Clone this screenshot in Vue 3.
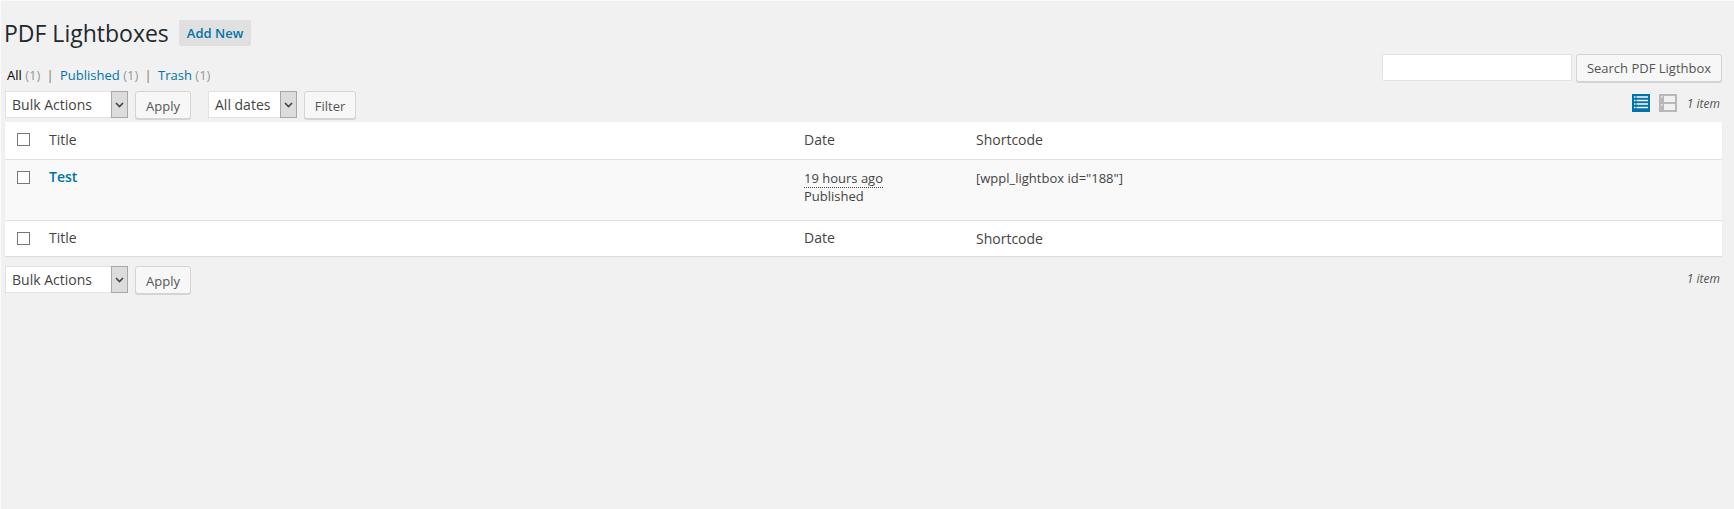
<template>
  <div class="wrap">
    <div class="heading">
      <h1>PDF Lightboxes</h1>
      <a class="add-new">Add New</a>
    </div>

    <div class="top-row">
      <ul class="subsub">
        <li><span class="current">All</span> <span class="count">(1)</span></li>
        <li class="sep">|</li>
        <li><a>Published</a> <span class="count">(1)</span></li>
        <li class="sep">|</li>
        <li><a>Trash</a> <span class="count">(1)</span></li>
      </ul>
      <div class="search">
        <div class="search-input"></div>
        <button class="btn search-btn">Search PDF Ligthbox</button>
      </div>
    </div>

    <div class="tablenav top">
      <div class="actions">
        <div class="select bulk">
          <span class="select-label">Bulk Actions</span>
          <span class="select-arrow">
            <svg width="9" height="6" viewBox="0 0 9 6"><path d="M1 1l3.5 3.5L8 1" fill="none" stroke="#444" stroke-width="1.6" /></svg>
          </span>
        </div>
        <button class="btn apply">Apply</button>
        <div class="select dates">
          <span class="select-label">All dates</span>
          <span class="select-arrow">
            <svg width="9" height="6" viewBox="0 0 9 6"><path d="M1 1l3.5 3.5L8 1" fill="none" stroke="#444" stroke-width="1.6" /></svg>
          </span>
        </div>
        <button class="btn filter">Filter</button>
      </div>
      <div class="nav-right">
        <svg class="view-icon" width="18" height="18" viewBox="0 0 18 18">
          <rect width="18" height="18" fill="#0073aa" />
          <path d="M2 3h14M2 6.5h14M2 10h14M2 13.5h14" stroke="#fff" stroke-width="1.6" />
          <path d="M4 2v14" stroke="#0073aa" stroke-width="1" />
        </svg>
        <svg class="view-icon second" width="18" height="18" viewBox="0 0 18 18">
          <rect width="18" height="18" fill="#b8b8b8" />
          <rect x="5" y="2" width="11" height="6" fill="#f1f1f1" />
          <rect x="5" y="10" width="11" height="6" fill="#f1f1f1" />
          <rect x="2" y="2" width="1.5" height="2" fill="#e4e4e4" />
          <rect x="2" y="10" width="1.5" height="2" fill="#e4e4e4" />
        </svg>
        <span class="items">1 item</span>
      </div>
    </div>

    <table class="list">
      <thead>
        <tr>
          <th class="col-check"><span class="check"></span></th>
          <th class="col-title">Title</th>
          <th class="col-date">Date</th>
          <th>Shortcode</th>
        </tr>
      </thead>
      <tbody>
        <tr v-for="row in rows" :key="row.id">
          <td class="col-check"><span class="check"></span></td>
          <td class="col-title"><a class="row-title">{{ row.title }}</a></td>
          <td class="col-date">
            <abbr>{{ row.ago }}</abbr><br />{{ row.status }}
          </td>
          <td>{{ row.shortcode }}</td>
        </tr>
      </tbody>
      <tfoot>
        <tr>
          <th class="col-check"><span class="check"></span></th>
          <th class="col-title">Title</th>
          <th class="col-date">Date</th>
          <th class="col-code">Shortcode</th>
        </tr>
      </tfoot>
    </table>

    <div class="tablenav bottom">
      <div class="actions">
        <div class="select bulk">
          <span class="select-label">Bulk Actions</span>
          <span class="select-arrow">
            <svg width="9" height="6" viewBox="0 0 9 6"><path d="M1 1l3.5 3.5L8 1" fill="none" stroke="#444" stroke-width="1.6" /></svg>
          </span>
        </div>
        <button class="btn apply">Apply</button>
      </div>
      <span class="items">1 item</span>
    </div>
  </div>
</template>

<script setup>
const rows = [
  {
    id: 188,
    title: "Test",
    ago: "19 hours ago",
    status: "Published",
    shortcode: '[wppl_lightbox id="188"]',
  },
];
</script>

<style>
html,
body {
  margin: 0;
  background: #f1f1f1;
}
</style>

<style scoped>
.wrap {
  box-sizing: border-box;
  height: 509px;
  padding: 0 12px 0 4px;
  border-top: 1px solid #fbfbfb;
  border-left: 1px solid #fbfbfb;
  font-family: "Open Sans", sans-serif;
  font-size: 13px;
  color: #444;
  overflow: hidden;
}

.heading {
  display: flex;
  align-items: center;
  gap: 10px;
  height: 26px;
  padding-top: 19px;
}

h1 {
  margin: 0 0 0 -1px;
  font-size: 23px;
  font-weight: 400;
  color: #23282d;
  line-height: 26px;
}

.add-new {
  display: block;
  padding: 0 8px;
  line-height: 26px;
  background: #e0e0e0;
  border-radius: 2px;
  color: #0073aa;
  font-weight: 600;
  font-size: 13px;
}

.top-row {
  display: flex;
  justify-content: space-between;
  height: 37px;
  margin-top: 8px;
}

.subsub {
  display: flex;
  gap: 6.3px;
  margin: 0;
  padding: 12px 0 0 2px;
  list-style: none;
  line-height: 18px;
  color: #666;
}

.subsub a {
  color: #0073aa;
}

.current {
  color: #000;
}

.count {
  color: #999;
}

.sep {
  color: #777;
}

.search {
  display: flex;
  gap: 4px;
}

.search-input {
  width: 190px;
  height: 27px;
  box-sizing: border-box;
  background: #fff;
  border: 1px solid #e2e2e2;
  border-radius: 2px;
}

.btn {
  box-sizing: border-box;
  height: 28px;
  padding: 0 10px;
  background: #f7f7f7;
  border: 1px solid #d4d4d4;
  border-radius: 3px;
  box-shadow: 0 1px 0 #d4d4d4;
  font-family: inherit;
  font-size: 13px;
  color: #555;
}

.search-btn {
  width: 146px;
  padding: 0;
}

.tablenav {
  display: flex;
  justify-content: space-between;
}

.tablenav.top {
  height: 31px;
}

.tablenav.bottom {
  margin-top: 10px;
}

.actions {
  display: flex;
  align-items: flex-start;
}

.select {
  display: flex;
  box-sizing: border-box;
  height: 27px;
  background: #fff;
  border: 1px solid #e2e2e2;
  color: #444;
  font-size: 14px;
}

.select.bulk {
  width: 123px;
}

.select.dates {
  width: 89px;
  margin-left: 17px;
}

.select-label {
  flex: 1;
  padding-left: 6px;
  line-height: 26px;
}

.select-arrow {
  display: flex;
  align-items: center;
  justify-content: center;
  width: 15px;
  background: #dcdcdc;
  border: 1px solid #a8a8a8;
  margin: -1px -1px -1px 0;
}

.apply {
  width: 56px;
  margin-left: 7px;
  padding: 2px 0 0;
}

.filter {
  width: 52px;
  margin-left: 7px;
  padding: 2px 0 0;
}

.nav-right {
  display: flex;
  align-items: flex-start;
  margin-top: 3px;
  padding-right: 2px;
}

.view-icon.second {
  margin-left: 9px;
}

.items {
  font-size: 12px;
  font-style: italic;
  color: #555;
}

.nav-right .items {
  margin-left: 10px;
  line-height: 20px;
}

.tablenav.bottom .items {
  padding-right: 2px;
  line-height: 26px;
}

.list {
  width: 1717px;
  border-collapse: collapse;
  table-layout: fixed;
  background: #fff;
  box-shadow: 0 1px 1px rgba(0, 0, 0, 0.08);
  font-size: 13px;
}

.list th,
.list td {
  padding: 0;
  text-align: left;
  font-weight: 400;
}

.list thead tr {
  height: 37px;
  border-bottom: 1px solid #e1e1e1;
}

.list tfoot tr {
  height: 36px;
  border-top: 1px solid #e1e1e1;
}

.list th {
  font-size: 14px;
  color: #444;
  line-height: 20px;
}

.list tfoot .col-code {
  padding-top: 1px;
}

.list tbody td {
  height: 61px;
  vertical-align: top;
  padding-top: 9px;
  box-sizing: border-box;
  background: #f9f9f9;
  line-height: 18px;
}

.col-check {
  width: 44px;
}

.col-title {
  width: 755px;
}

.col-date {
  width: 172px;
}

.check {
  display: block;
  width: 13px;
  height: 13px;
  margin-left: 12px;
  box-sizing: border-box;
  background: #fff;
  border: 1px solid #777;
}

.list thead .check {
  margin-top: -2px;
}

.list tbody .check {
  margin-top: 2px;
}

.row-title {
  display: block;
  margin-top: -1px;
  color: #0073aa;
  font-size: 14px;
  font-weight: 600;
}

abbr {
  border-bottom: 1px dotted #444;
}
</style>
